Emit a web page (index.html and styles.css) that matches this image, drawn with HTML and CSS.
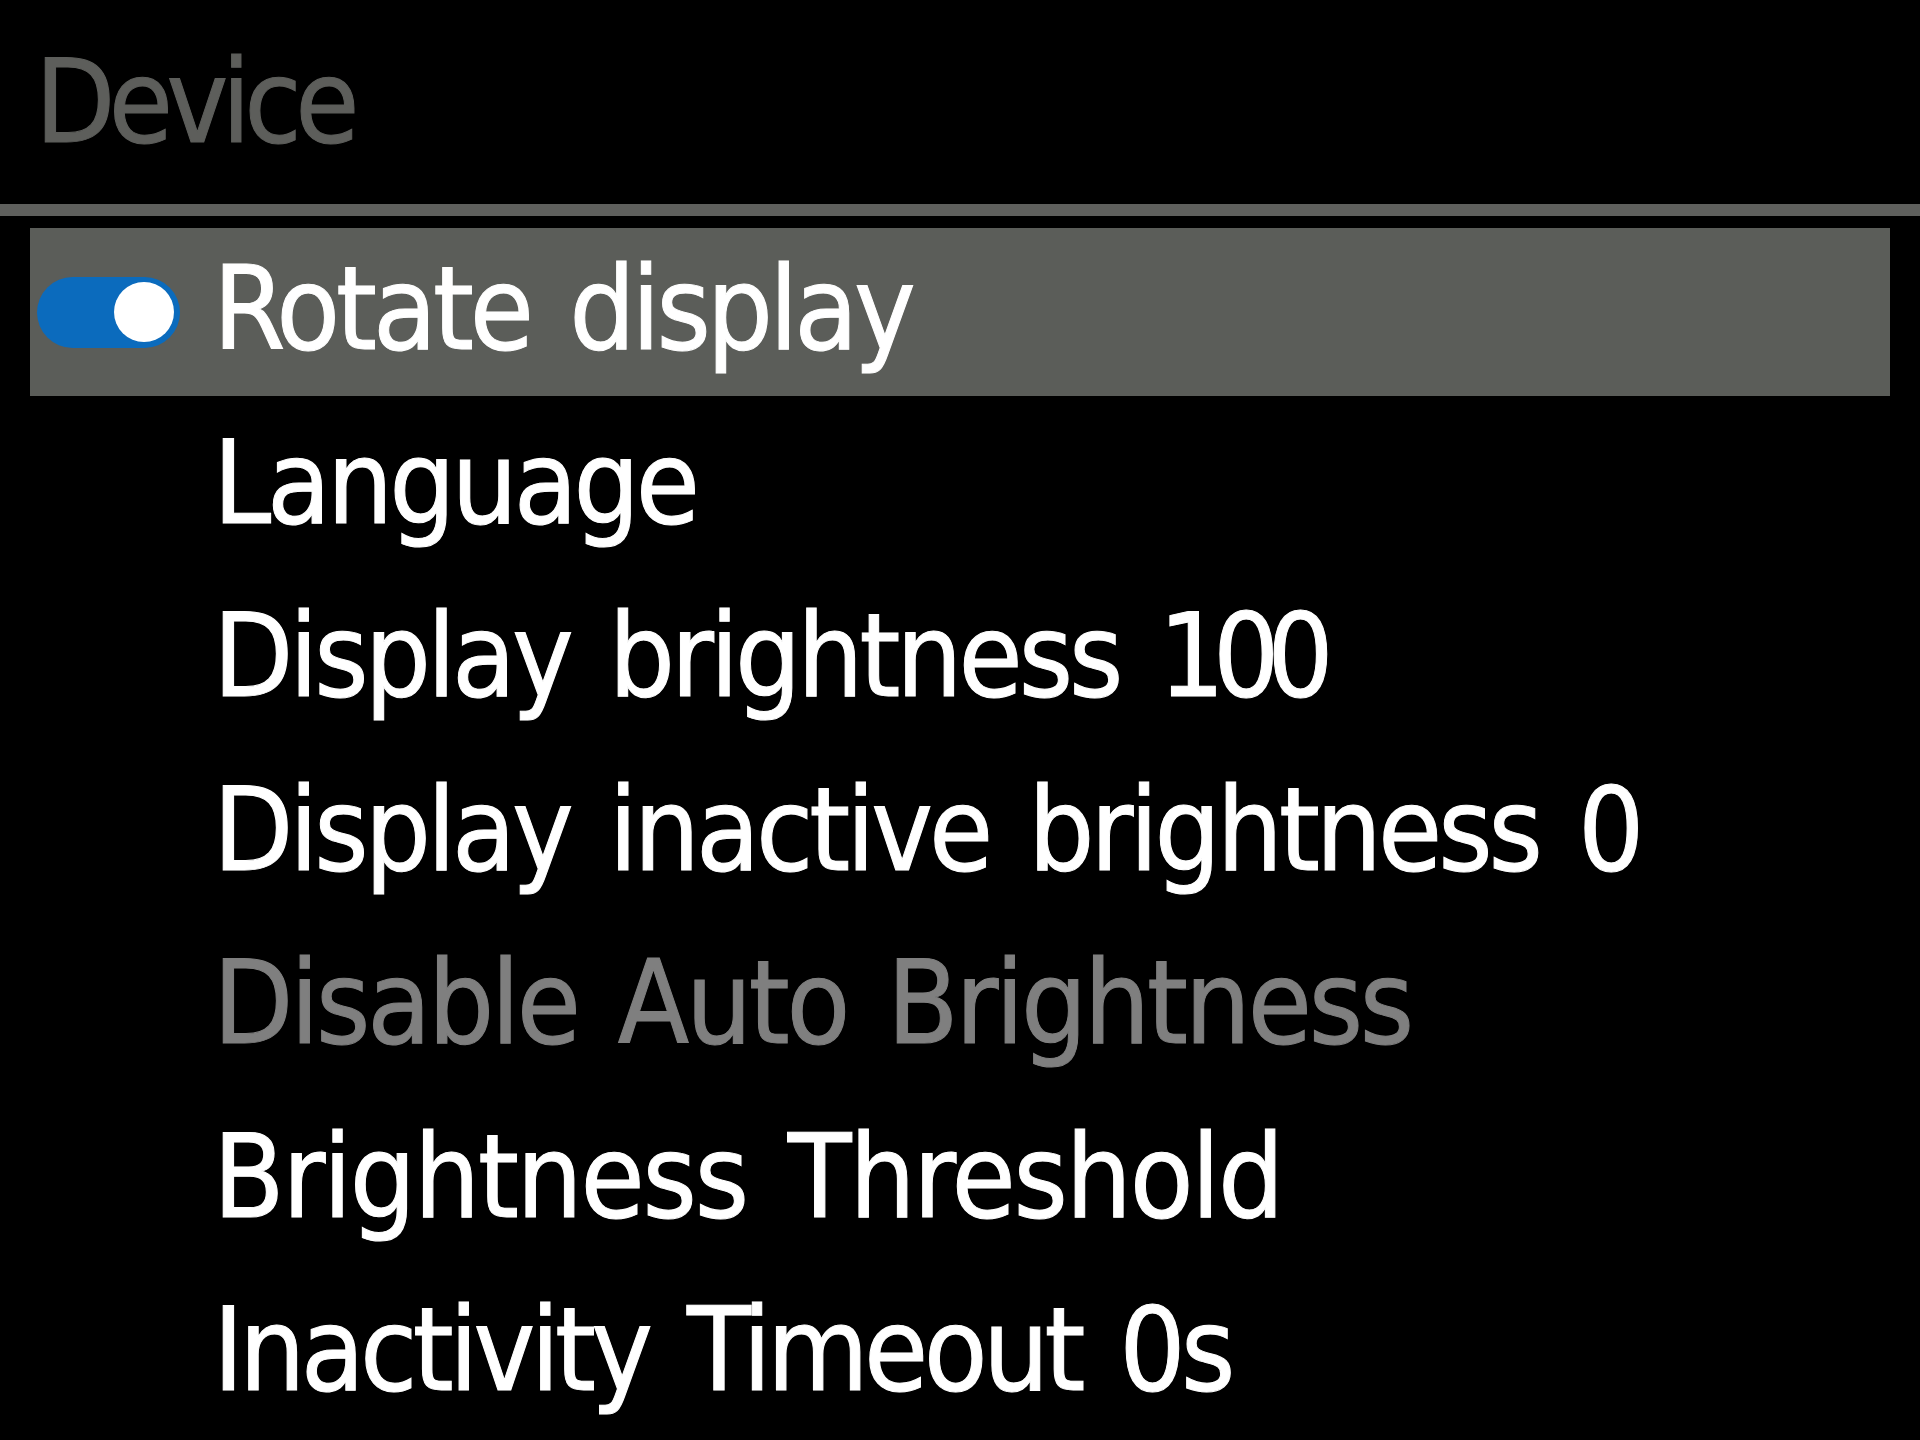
FILE: index.html
```html
<!DOCTYPE html>
<html lang="en">
<head>
<meta charset="utf-8">
<title>Device</title>
<link rel="stylesheet" href="styles.css">
</head>
<body>
<div class="screen">
  <header class="title">Device</header>
  <div class="divider"></div>
  <ul class="menu">
    <li class="item selected">
      <span class="slot"><span class="toggle on"><span class="knob"></span></span></span>
      <span class="label">Rotate display</span>
    </li>
    <li class="item"><span class="slot"></span><span class="label">Language</span></li>
    <li class="item"><span class="slot"></span><span class="label">Display brightness <span class="num">100</span></span></li>
    <li class="item"><span class="slot"></span><span class="label">Display inactive brightness <span class="num">0</span></span></li>
    <li class="item disabled"><span class="slot"></span><span class="label wide">Disable Auto Brightness</span></li>
    <li class="item"><span class="slot"></span><span class="label wider">Brightness Threshold</span></li>
    <li class="item"><span class="slot"></span><span class="label narrow">Inactivity Timeout 0s</span></li>
  </ul>
</div>
</body>
</html>
```
FILE: styles.css
```css
html, body {
  margin: 0;
  padding: 0;
  background: #000;
}
body {
  width: 1920px;
  height: 1440px;
  overflow: hidden;
  font-family: "DejaVu Sans Condensed", "DejaVu Sans", sans-serif;
  font-stretch: condensed;
  color: #fff;
}
.screen {
  display: flex;
  flex-direction: column;
}
.title {
  height: 204px;
  box-sizing: border-box;
  padding-left: 35px;
  padding-top: 34px;
  font-size: 116px;
  line-height: 136px;
  letter-spacing: -6.5px;
  color: #5d5e5b;
  -webkit-text-stroke: 1px #5d5e5b;
}
.divider {
  height: 12px;
  background: #5f605d;
}
.menu {
  list-style: none;
  margin: 12px 0 0 30px;
  padding: 0;
  width: 1860px;
  display: flex;
  flex-direction: column;
  gap: 5.5px;
}
.item {
  height: 168px;
  display: flex;
  align-items: center;
  font-size: 116px;
  letter-spacing: -4px;
  word-spacing: 10px;
  -webkit-text-stroke: 1px #fff;
}
.item.selected {
  background: #5b5d59;
}
.item.disabled {
  color: #7f7f7f;
  -webkit-text-stroke: 1px #7f7f7f;
}
.slot {
  width: 150px;
  flex: none;
  display: flex;
  justify-content: flex-end;
  margin-right: 33px;
}
.label {
  line-height: 136px;
  padding-bottom: 6px;
  white-space: nowrap;
}
.label.wide {
  letter-spacing: -3.2px;
}
.label.wider {
  letter-spacing: -2.2px;
}
.label.narrow {
  letter-spacing: -4.6px;
}
.num {
  letter-spacing: -12px;
}
.toggle {
  width: 143px;
  height: 71px;
  border-radius: 36px;
  background: #0b6bbd;
  display: flex;
  align-items: center;
  justify-content: flex-end;
  padding-right: 6px;
  box-sizing: border-box;
  -webkit-text-stroke: 0;
}
.knob {
  width: 60px;
  height: 60px;
  border-radius: 50%;
  background: #fff;
}
```
